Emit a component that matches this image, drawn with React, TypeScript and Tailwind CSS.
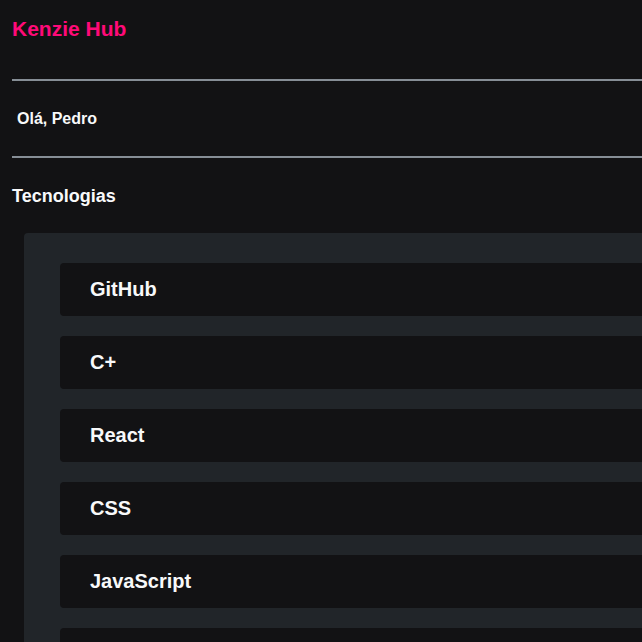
import React from "react";

const techs = ["GitHub", "C+", "React", "CSS", "JavaScript", "TypeScript"];

export default function App() {
  return (
    <div
      className="min-h-screen w-full overflow-hidden bg-[#121214] text-[#f8f9fa]"
      style={{ fontFamily: '"Liberation Sans", Arial, sans-serif' }}
    >
      <header className="pl-3">
        <div className="h-[79px] pt-[13px]">
          <h1 className="text-[21px] leading-[1.5] font-bold text-[#ff0a78]">Kenzie Hub</h1>
        </div>
        <div className="h-[2px] bg-[#868e96]" />
        <div className="flex h-[75px] items-center pl-[5px]">
          <p className="text-[16px] font-bold">Olá, Pedro</p>
        </div>
        <div className="h-[2px] bg-[#868e96]" />
      </header>
      <main className="pl-3">
        <h2 className="mt-[25px] text-[18px] leading-[1.5] font-bold">Tecnologias</h2>
        <div className="ml-3 mt-[23px] rounded-l-[4px] bg-[#212529] pl-9 pt-[30px] pb-[30px]">
          <ul className="flex flex-col gap-5">
            {techs.map((t) => (
              <li
                key={t}
                className="flex h-[53px] items-center rounded-l-[4px] bg-[#121214] pl-[30px] pb-[1px]"
              >
                <span className="text-[20px] font-bold">{t}</span>
              </li>
            ))}
          </ul>
        </div>
      </main>
    </div>
  );
}
